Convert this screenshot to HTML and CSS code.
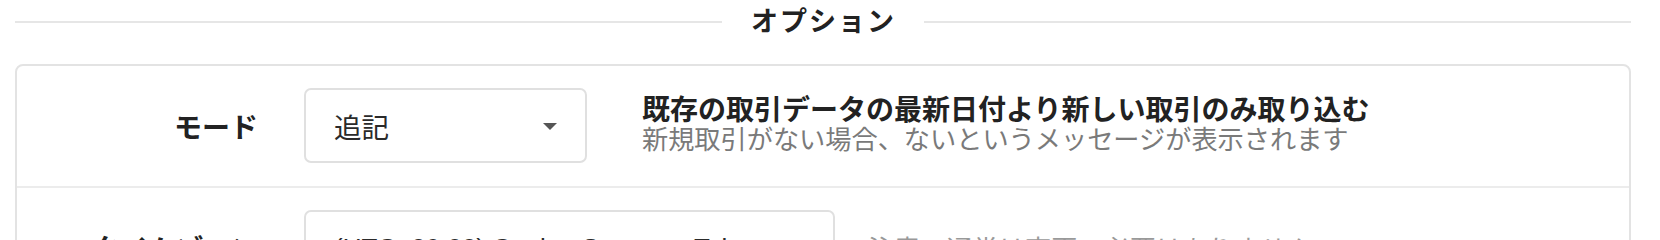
FILE: index.html
```html
<!DOCTYPE html>
<html lang="ja">
<head>
<meta charset="utf-8">
<title>オプション</title>
<link rel="stylesheet" href="styles.css">
</head>
<body>
<div class="page">
  <div class="section-title">
    <span class="rule"></span>
    <h2 class="title-text">オプション</h2>
    <span class="rule"></span>
  </div>
  <div class="card">
    <div class="row">
      <div class="label">モード</div>
      <div class="select select-mode">
        <span class="select-value">追記</span>
        <span class="caret"></span>
      </div>
      <div class="desc desc-mode">
        <div class="desc-main">既存の取引データの最新日付より新しい取引のみ取り込む</div>
        <div class="desc-sub">新規取引がない場合、ないというメッセージが表示されます</div>
      </div>
    </div>
    <div class="row">
      <div class="label">タイムゾーン</div>
      <div class="select select-tz">
        <span class="select-value">(UTC+09:00) Osaka, Sapporo, Tokyo</span>
        <span class="caret"></span>
      </div>
      <div class="desc desc-tz">
        <div class="desc-sub">注意：通常は変更の必要はありません</div>
      </div>
    </div>
  </div>
</div>
</body>
</html>
```

FILE: styles.css
```css
html, body {
  margin: 0;
  padding: 0;
  background: #ffffff;
  overflow: hidden;
}

body {
  font-family: "Noto Sans CJK JP", "Noto Sans", sans-serif;
  color: #222222;
}

.page {
  padding: 0 29px 0 15px;
}

.section-title {
  display: flex;
  align-items: center;
  height: 44px;
  margin-bottom: 20px;
}

.rule {
  flex: 1;
  height: 2px;
  background: #e6e6e6;
}

.title-text {
  margin: 0 28px 4px 29px;
  font-size: 27px;
  font-weight: 700;
  line-height: 40px;
  letter-spacing: 2px;
  color: #222222;
}

.card {
  border: 2px solid #e3e3e3;
  border-radius: 8px;
}

.row {
  display: flex;
  align-items: center;
  padding: 22px 0 23px;
}

.row + .row {
  border-top: 2px solid #ececec;
}

.label {
  width: 241px;
  flex: none;
  text-align: right;
  font-size: 28px;
  font-weight: 700;
  line-height: 36px;
  color: #222222;
}

.select {
  flex: none;
  box-sizing: border-box;
  height: 75px;
  margin-left: 46px;
  border: 2px solid #e0e0e0;
  border-radius: 7px;
  display: flex;
  align-items: center;
  justify-content: space-between;
  padding: 0 28px 0 28px;
  background: #ffffff;
}

.select-mode {
  width: 283px;
}

.select-tz {
  width: 531px;
}

.select-value {
  font-size: 27.5px;
  line-height: 36px;
  color: #2a2a2a;
  white-space: nowrap;
}

.select-tz .select-value {
  font-family: "Liberation Sans", "Noto Sans CJK JP", sans-serif;
  font-size: 26px;
}

.caret {
  width: 0;
  height: 0;
  border-left: 7px solid transparent;
  border-right: 7px solid transparent;
  border-top: 7px solid #555555;
  margin-top: 1px;
}

.desc-mode {
  margin-left: 55px;
  margin-bottom: 7px;
}

.desc-tz {
  margin-left: 33px;
}

.desc-main {
  font-size: 28px;
  font-weight: 700;
  line-height: 31px;
  color: #222222;
  white-space: nowrap;
}

.desc-sub {
  font-size: 26.2px;
  line-height: 28px;
  color: #7a7a7a;
  white-space: nowrap;
}

.desc-tz .desc-sub {
  color: #999999;
}
```
